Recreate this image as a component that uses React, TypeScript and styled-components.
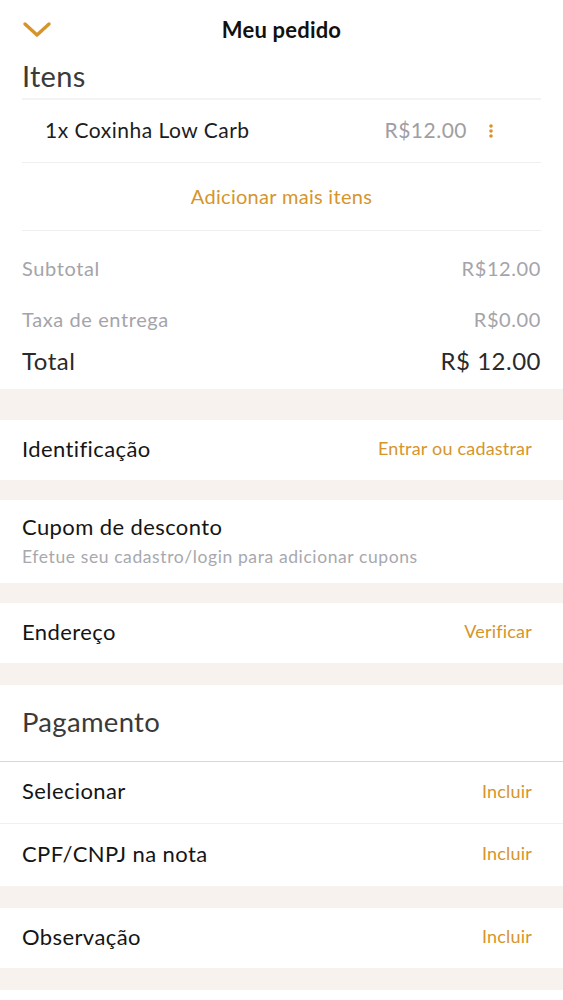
import React from 'react';
import styled, { createGlobalStyle } from 'styled-components';

const orange = '#D6952B';
const beige = '#F7F2EE';

const GlobalStyle = createGlobalStyle`
  html, body {
    margin: 0;
    padding: 0;
    background: #fff;
    font-family: 'Lato', 'Noto Sans', sans-serif;
    color: #1c1c1c;
  }
`;

const Page = styled.div`
  width: 563px;
  background: #fff;
  display: flex;
  flex-direction: column;
`;

const Header = styled.header`
  height: 58px;
  display: flex;
  align-items: center;
  justify-content: center;
  position: relative;
`;

const BackButton = styled.button`
  position: absolute;
  left: 18px;
  top: 14px;
  width: 38px;
  height: 32px;
  border: 0;
  background: none;
  padding: 0;
  display: flex;
  align-items: center;
  justify-content: center;
`;

const Title = styled.h1`
  margin: 0;
  font-size: 22px;
  font-weight: 700;
  letter-spacing: 0.2px;
  color: #111;
`;

const Card = styled.section`
  background: #fff;
  padding: 0 22px;
`;

const SectionTitle = styled.h2`
  margin: 0;
  height: 40px;
  box-sizing: border-box;
  padding-bottom: 6px;
  display: flex;
  align-items: center;
  font-size: 29px;
  font-weight: 400;
  letter-spacing: 0.3px;
  color: #3a3a3a;
`;

const ItemRow = styled.div`
  height: 62px;
  display: flex;
  align-items: center;
  padding: 0 47px 0 23px;
  border-top: 2px solid #f4f2f5;
  border-bottom: 1px solid #efefef;
  font-size: 21px;
  letter-spacing: 0.5px;
`;

const ItemName = styled.span`
  flex: 1;
  color: #1c1c1c;
  margin-bottom: 3px;
`;

const ItemPrice = styled.span`
  color: #9e9ea4;
  margin-right: 21px;
  margin-bottom: 3px;
`;

const AddMore = styled.div`
  height: 68px;
  box-sizing: border-box;
  padding-bottom: 2px;
  display: flex;
  align-items: center;
  justify-content: center;
  font-size: 20px;
  letter-spacing: 0.3px;
  color: ${orange};
  border-bottom: 1px solid #efefef;
`;

const Summary = styled.div`
  padding: 12px 0 14px;
  display: flex;
  flex-direction: column;
`;

const SumRow = styled.div<{ $h: number; $strong?: boolean }>`
  height: ${p => p.$h}px;
  display: flex;
  align-items: center;
  justify-content: space-between;
  font-size: ${p => (p.$strong ? 24 : 20)}px;
  letter-spacing: ${p => (p.$strong ? 0.5 : 0.6)}px;
  color: ${p => (p.$strong ? '#2a2a2a' : '#a4a4aa')};
`;

const Gap = styled.div<{ $h: number }>`
  height: ${p => p.$h}px;
  background: ${beige};
`;

const Row = styled.div<{ $h: number; $line?: string }>`
  height: ${p => p.$h}px;
  box-sizing: border-box;
  display: flex;
  align-items: center;
  justify-content: space-between;
  padding: 0 31px 4px 22px;
  background: #fff;
  border-top: ${p => (p.$line ? `1px solid ${p.$line}` : '0')};
`;

const Label = styled.span`
  font-size: 22px;
  letter-spacing: 0.4px;
  color: #151515;
`;

const Action = styled.span`
  font-size: 18px;
  letter-spacing: 0.2px;
  color: ${orange};
`;

const Stack = styled.div`
  display: flex;
  flex-direction: column;
  gap: 6px;
`;

const Hint = styled.span`
  font-size: 17.5px;
  letter-spacing: 0.6px;
  color: #a8a8ae;
`;

const PayTitle = styled.div`
  height: 76px;
  box-sizing: border-box;
  padding: 0 22px 3px;
  display: flex;
  align-items: center;
  font-size: 27.5px;
  letter-spacing: 0.3px;
  color: #3a3a3a;
  background: #fff;
`;

const Chevron = () => (
  <svg width="30" height="18" viewBox="0 0 30 18">
    <path d="M3 3 L15 14 L27 3" fill="none" stroke={orange} strokeWidth="3.4" strokeLinecap="round" strokeLinejoin="round" />
  </svg>
);

const Dots = () => (
  <svg width="6" height="16" viewBox="0 0 6 16">
    <circle cx="3" cy="3" r="1.8" fill={orange} />
    <circle cx="3" cy="8" r="1.8" fill={orange} />
    <circle cx="3" cy="13" r="1.8" fill={orange} />
  </svg>
);

export default function App() {
  return (
    <Page>
      <GlobalStyle />
      <Header>
        <BackButton aria-label="Voltar">
          <Chevron />
        </BackButton>
        <Title>Meu pedido</Title>
      </Header>

      <Card>
        <SectionTitle>Itens</SectionTitle>
        <ItemRow>
          <ItemName>1x Coxinha Low Carb</ItemName>
          <ItemPrice>R$12.00</ItemPrice>
          <Dots />
        </ItemRow>
        <AddMore>Adicionar mais itens</AddMore>
        <Summary>
          <SumRow $h={50}>
            <span>Subtotal</span>
            <span>R$12.00</span>
          </SumRow>
          <SumRow $h={52}>
            <span>Taxa de entrega</span>
            <span>R$0.00</span>
          </SumRow>
          <SumRow $h={30} $strong>
            <span>Total</span>
            <span>R$ 12.00</span>
          </SumRow>
        </Summary>
      </Card>

      <Gap $h={31} />
      <Row $h={60}>
        <Label>Identificação</Label>
        <Action>Entrar ou cadastrar</Action>
      </Row>
      <Gap $h={20} />
      <Row $h={83}>
        <Stack>
          <Label>Cupom de desconto</Label>
          <Hint>Efetue seu cadastro/login para adicionar cupons</Hint>
        </Stack>
      </Row>
      <Gap $h={20} />
      <Row $h={60}>
        <Label>Endereço</Label>
        <Action>Verificar</Action>
      </Row>
      <Gap $h={22} />
      <PayTitle>Pagamento</PayTitle>
      <Row $h={62} $line="#d6d6d8">
        <Label>Selecionar</Label>
        <Action>Incluir</Action>
      </Row>
      <Row $h={63} $line="#f0f0f0">
        <Label>CPF/CNPJ na nota</Label>
        <Action>Incluir</Action>
      </Row>
      <Gap $h={22} />
      <Row $h={60}>
        <Label>Observação</Label>
        <Action>Incluir</Action>
      </Row>
      <Gap $h={22} />
      <Row $h={33} />
    </Page>
  );
}
